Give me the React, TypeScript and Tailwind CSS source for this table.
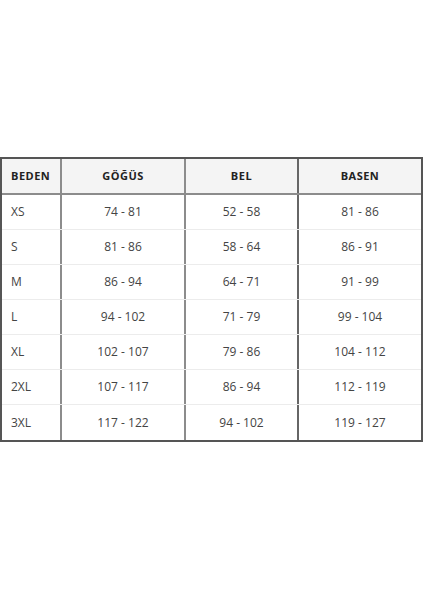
import React from "react";

const rows = [
  ["XS", "74 - 81", "52 - 58", "81 - 86"],
  ["S", "81 - 86", "58 - 64", "86 - 91"],
  ["M", "86 - 94", "64 - 71", "91 - 99"],
  ["L", "94 - 102", "71 - 79", "99 - 104"],
  ["XL", "102 - 107", "79 - 86", "104 - 112"],
  ["2XL", "107 - 117", "86 - 94", "112 - 119"],
  ["3XL", "117 - 122", "94 - 102", "119 - 127"],
];

const cols = "grid grid-cols-[60px_124px_113px_122px]";

const App = () => {
  return (
    <div className="w-[424px] h-[600px] bg-white pt-[157px]" style={{ fontFamily: '"Open Sans", sans-serif' }}>
      <div className="w-[423px] border-2 border-[#555]">
        <div className={`${cols} h-[36px] bg-[#f4f4f4] border-b-2 border-[#8c8c8c] text-[11px] font-bold text-[#222] tracking-[0.5px]`}>
          <div className="flex items-center pl-[9px] border-r-2 border-[#8c8c8c]">BEDEN</div>
          <div className="flex items-center justify-center border-r-2 border-[#8c8c8c]">GÖĞÜS</div>
          <div className="flex items-center justify-center border-r-2 border-[#666]">BEL</div>
          <div className="flex items-center justify-center">BASEN</div>
        </div>
        {rows.map((r, i) => (
          <div
            key={r[0]}
            className={`${cols} h-[35px] text-[12px] text-[#444] ${i < rows.length - 1 ? "border-b border-[#ececec]" : ""}`}
          >
            <div className="flex items-center pl-[9px] border-r-2 border-[#8c8c8c]">{r[0]}</div>
            <div className="flex items-center justify-center border-r-2 border-[#8c8c8c]">{r[1]}</div>
            <div className="flex items-center justify-center border-r-2 border-[#666]">{r[2]}</div>
            <div className="flex items-center justify-center">{r[3]}</div>
          </div>
        ))}
      </div>
    </div>
  );
};

export default App;
